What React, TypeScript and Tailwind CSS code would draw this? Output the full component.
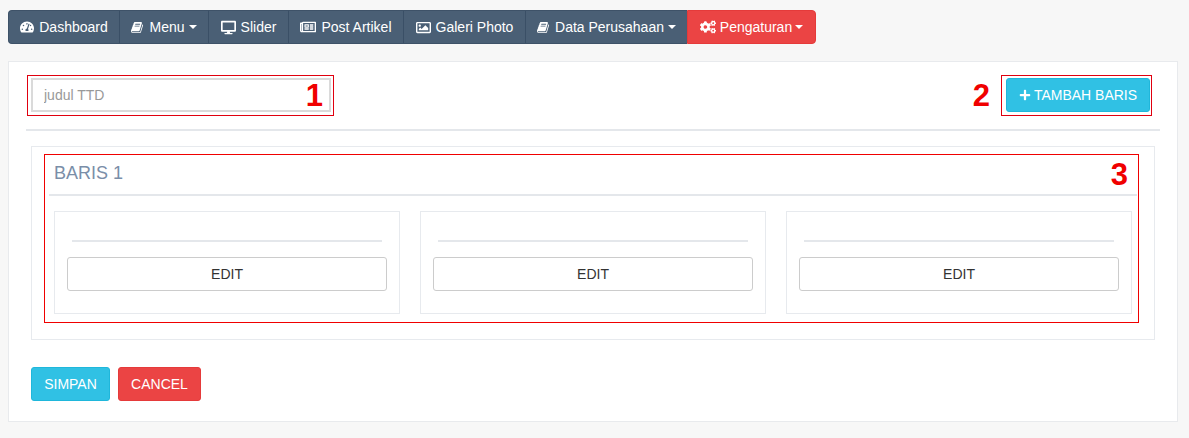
import type { ReactNode } from 'react'
import { FaTachometerAlt, FaDesktop, FaRegNewspaper, FaRegImage, FaCogs, FaPlus } from 'react-icons/fa'

// slanted book, the react-icons one stands upright
function BookIcon() {
  return (
    <svg viewBox="0 0 1792 1792" width="13" height="13" fill="currentColor">
      <path d="M1639 478q40 57 18 129l-275 906q-19 64-76.5 107.5t-122.5 43.5h-923q-77 0-148.5-53.5t-99.5-131.5q-24-67-2-127 0-4 3-27t4-37q1-8-3-21.5t-3-19.5q2-11 8-21t16.5-23.5 16.5-23.5q23-38 45-91.5t30-91.5q3-10 .5-30t-.5-28q3-11 17-28t17-23q21-36 42-92t25-90q1-9-2.5-32t.5-28q4-13 22-30.5t22-22.5q19-26 42.5-84.5t27.5-96.5q1-8-3-25.5t-2-26.5q2-8 9-18t18-23 17-21q8-12 16.5-30.5t15-35 16-36 19.5-32 26.5-23.5 36-11.5 47.5 5.5l-1 3q38-9 51-9h761q74 0 114 56t18 130l-274 906q-36 119-71.5 153.5t-128.5 34.5h-869q-27 0-38 15-11 16-1 43 24 70 144 70h923q29 0 56-15.5t35-41.5l300-987q7-22 5-57 38 15 59 43zm-1064 2q-4 13 2 22.5t20 9.5h608q13 0 25.5-9.5t16.5-22.5l21-64q4-13-2-22.5t-20-9.5h-608q-13 0-25.5 9.5t-16.5 22.5zm-83 256q-4 13 2 22.5t20 9.5h608q13 0 25.5-9.5t16.5-22.5l21-64q4-13-2-22.5t-20-9.5h-608q-13 0-25.5 9.5t-16.5 22.5z" />
    </svg>
  )
}

const navItems: { label: string; icon: ReactNode; caret?: boolean; width: string }[] = [
  { label: 'Dashboard', icon: <FaTachometerAlt size={14} />, width: 'w-[110px]' },
  { label: 'Menu', icon: <BookIcon />, caret: true, width: 'w-[89px]' },
  { label: 'Slider', icon: <FaDesktop size={15} />, width: 'w-[80px]' },
  { label: 'Post Artikel', icon: <FaRegNewspaper size={16} />, width: 'w-[115px]' },
  { label: 'Galeri Photo', icon: <FaRegImage size={15} />, width: 'w-[122px]' },
  { label: 'Data Perusahaan', icon: <BookIcon />, caret: true, width: 'w-[162px]' },
]

function Caret() {
  return <span className="-ml-[1px] inline-block w-0 h-0 border-x-[4px] border-x-transparent border-t-[4px] border-t-current" />
}

function EditCard() {
  return (
    <div className="flex-1 h-[103px] border border-[#e7eaee] pt-[28px] px-[12px]">
      <div className="mx-[5px] h-[2px] bg-[#e4e7eb]" />
      <button className="mt-[15px] w-full h-[34px] bg-white border border-[#ccc] rounded-[3px] text-[14px] text-[#333]">
        EDIT
      </button>
    </div>
  )
}

export default function App() {
  return (
    <div className="h-[438px] bg-[#f7f7f7] px-[8px] pt-[10px] font-['Liberation_Sans',Arial,sans-serif] overflow-hidden">
      {/* nav */}
      <div className="flex">
        <div className="flex h-[34px] bg-[#4a5f75] border border-[#3e5268] rounded-l-[4px] border-r-0 text-[14px] text-white">
          {navItems.map((item, i) => (
            <div
              key={item.label}
              className={`${item.width} flex items-center justify-center gap-[5px] ${i > 0 ? 'border-l border-[#3a4f66]' : ''}`}
            >
              {item.icon}
              <span>{item.label}</span>
              {item.caret && <Caret />}
            </div>
          ))}
        </div>
        <div className="w-[129px] h-[34px] flex items-center justify-center gap-[4px] bg-[#eb4444] border border-[#e53a3a] rounded-r-[4px] text-[14px] text-white">
          <FaCogs size={16} />
          <span>Pengaturan</span>
          <Caret />
        </div>
      </div>

      {/* panel */}
      <div className="mt-[17px] w-[1170px] h-[361px] bg-white border border-[#e8eaed] pt-[13px] px-[18px]">
        <div className="flex justify-between">
          <div className="relative w-[307px] h-[41px] border border-[#e0000f] pl-[3px] pt-[2px]">
            <input
              placeholder="judul TTD"
              className="w-[300px] h-[34px] border-2 border-[#dadada] pl-[11px] text-[14px] text-[#555] placeholder:text-[#999] outline-none"
            />
            <span className="absolute right-[10px] top-[-1px] text-[31px] leading-[41px] font-bold text-[#f00000]">1</span>
          </div>
          <div className="flex items-center mr-[7px]">
            <span className="mr-[11px] text-[31px] leading-[41px] font-bold text-[#f00000]">2</span>
            <div className="w-[151px] h-[41px] border border-[#e0000f] pl-[4px] pt-[2px]">
              <button className="w-[144px] h-[34px] flex items-center justify-center gap-[3px] bg-[#30c1e4] border border-[#1fb7db] rounded-[3px] text-[14px] text-white">
                <FaPlus size={12} />
                <span>TAMBAH BARIS</span>
              </button>
            </div>
          </div>
        </div>

        <div className="mt-[13px] -ml-[1px] w-[1134px] h-[2px] bg-[#e4e7eb]" />

        {/* baris */}
        <div className="mt-[15px] ml-[4px] w-[1124px] h-[194px] border border-[#e7eaee] pt-[7px] px-[12px]">
          <div className="relative w-[1095px] h-[169px] border border-[#f00000]">
            <div className="h-[39px] pl-[9px] pt-[7px] text-[18px] leading-[22px] text-[#7a8ea8]">BARIS 1</div>
            <span className="absolute right-[10px] top-[1px] text-[31px] leading-[38px] font-bold text-[#f00000]">3</span>
            <div className="ml-[4px] mr-[1px] h-[2px] bg-[#e4e7eb]" />
            <div className="flex gap-[20px] mt-[15px] pl-[9px] pr-[6px]">
              <EditCard />
              <EditCard />
              <EditCard />
            </div>
          </div>
        </div>

        <div className="mt-[27px] ml-[4px] flex gap-[8px]">
          <button className="w-[79px] h-[34px] bg-[#30c1e4] border border-[#1fb7db] rounded-[3px] text-[14px] text-white">SIMPAN</button>
          <button className="w-[83px] h-[34px] bg-[#eb4444] border border-[#e53a3a] rounded-[3px] text-[14px] text-white">CANCEL</button>
        </div>
      </div>
    </div>
  )
}
